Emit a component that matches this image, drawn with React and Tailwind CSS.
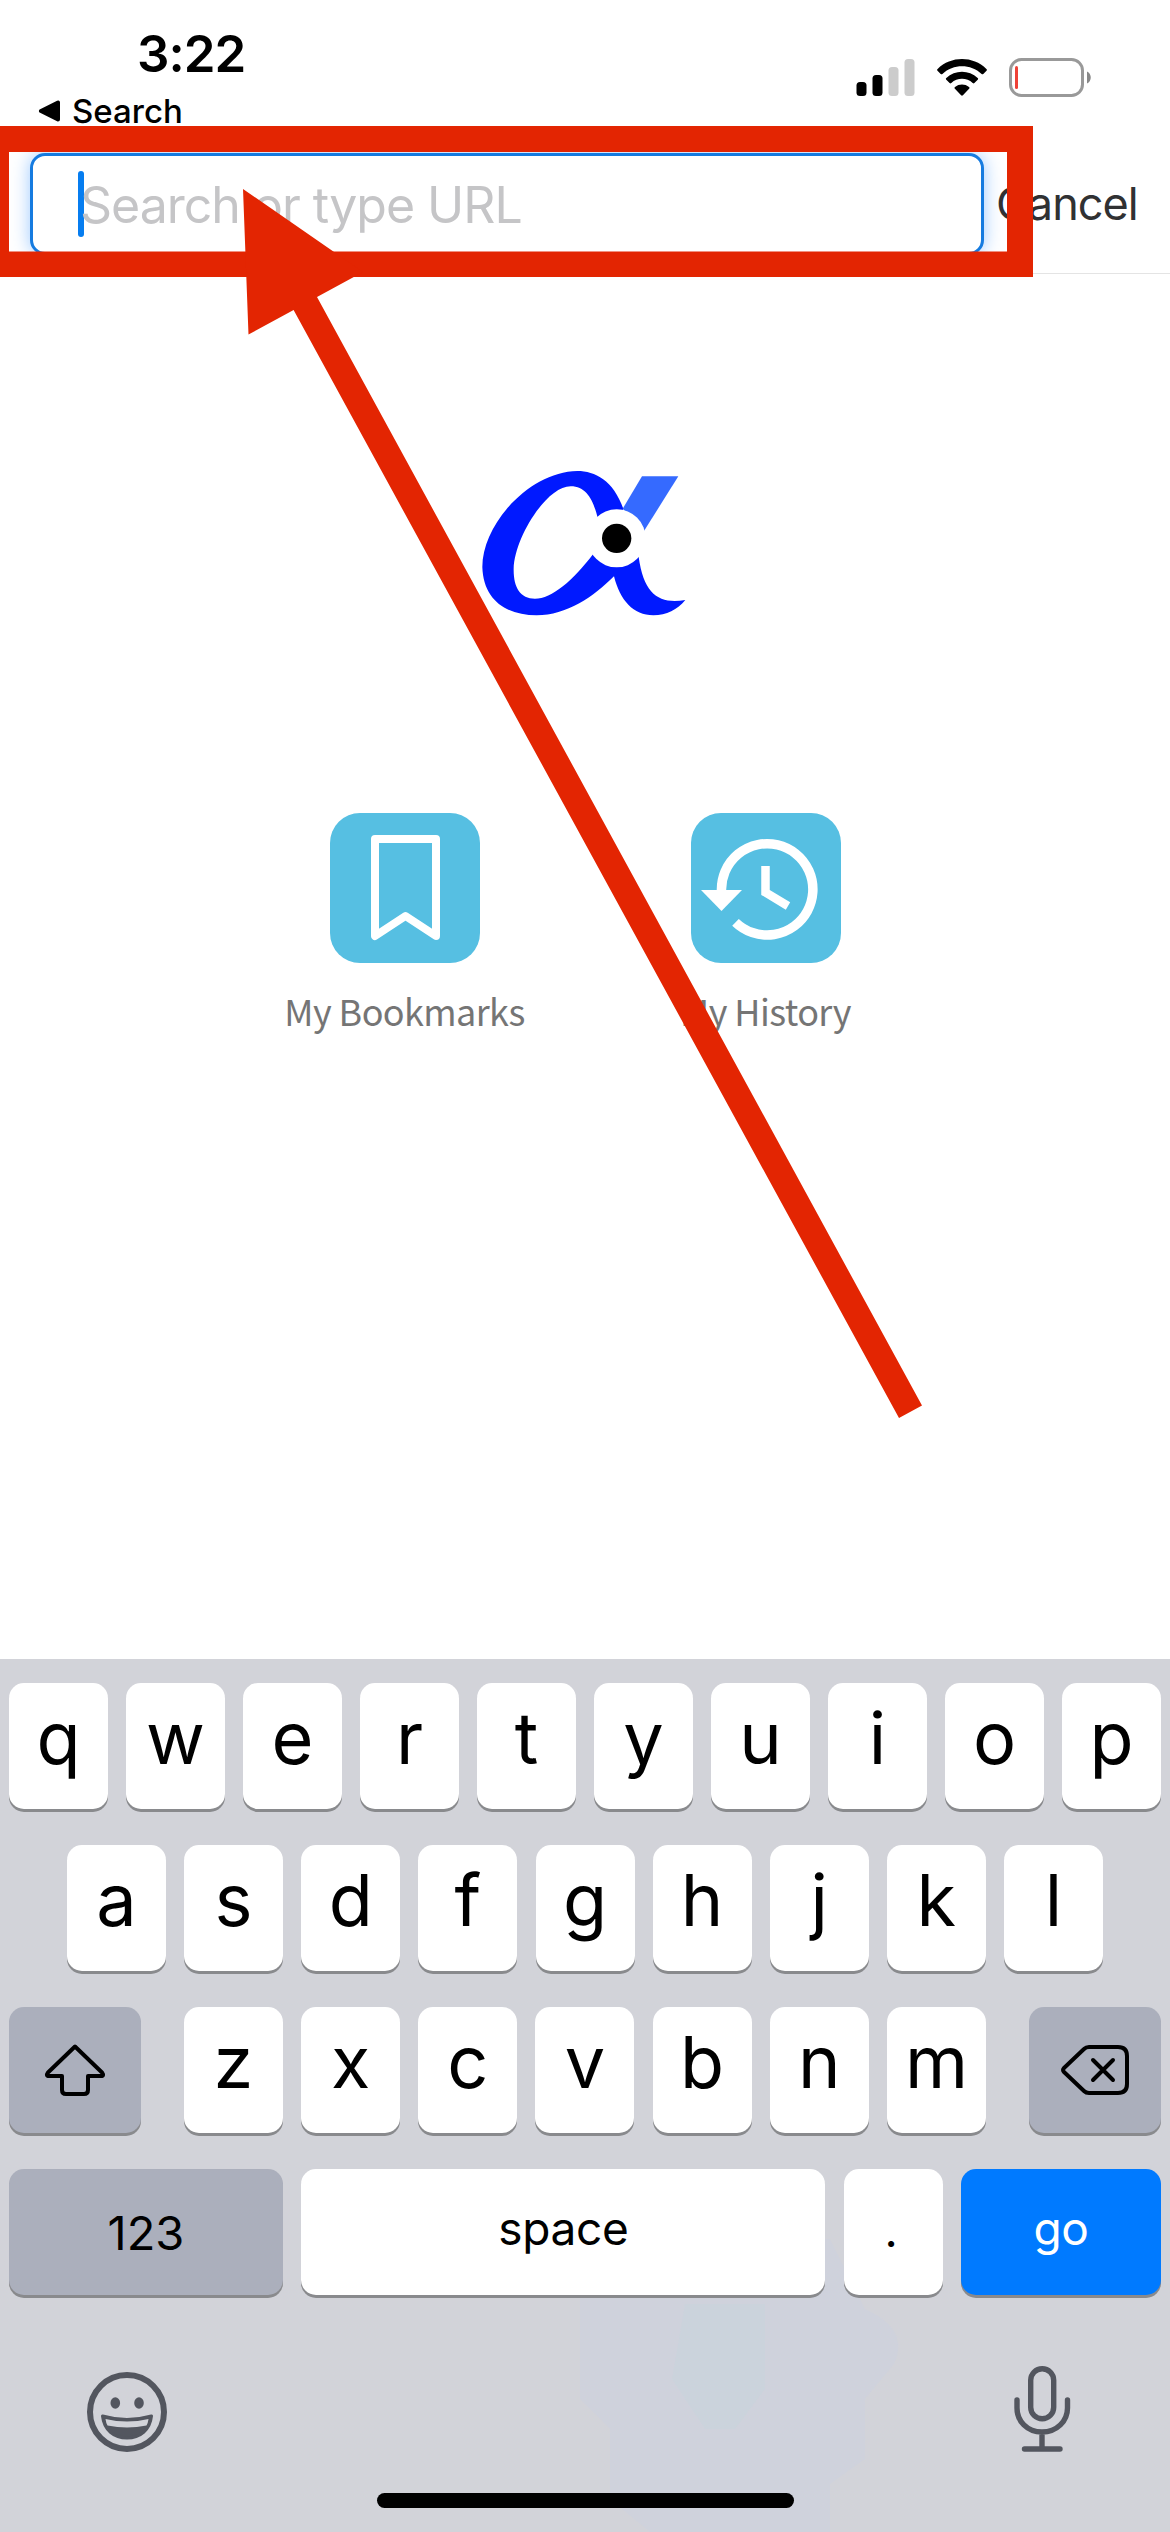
import React from "react";

function Key({ children, className = "" }) {
  return (
    <div
      className={
        "flex h-[126px] items-center justify-center rounded-[15px] shadow-[0_3px_0_#898a8d] " +
        className
      }
    >
      {children}
    </div>
  );
}

function Letter({ char }) {
  return (
    <Key className="w-[99px] bg-white pb-4 text-[72px] leading-none font-normal">{char}</Key>
  );
}

function StatusBar() {
  return (
    <header className="flex h-[126px] justify-between">
      <div className="flex flex-col pt-[24px] pl-[38px]">
        <div className="pl-[99px] text-[51px] leading-[60px] font-semibold tracking-[-1px]">3:22</div>
        <div className="mt-[7px] flex items-center text-[33px] leading-[40px] font-medium">
          <svg className="mr-[11px] h-[22px] w-[23px]" viewBox="0 0 23 22">
            <path d="M3 11L20 2.5v17z" fill="#000" stroke="#000" strokeWidth="4" strokeLinejoin="round" />
          </svg>
          <span>Search</span>
        </div>
      </div>
      <div className="flex items-start pt-[58px] pr-[77px]">
        <svg className="mt-px mr-[22px] h-[37px] w-[59px]" viewBox="0 0 59 37">
          <rect x="0.5" y="23" width="10" height="14" rx="3.5" />
          <rect x="16.5" y="16" width="10" height="21" rx="3.5" />
          <rect x="32.5" y="8" width="10" height="29" rx="3.5" fill="#ccc" />
          <rect x="48.5" y="0" width="10" height="37" rx="3.5" fill="#ccc" />
        </svg>
        <svg className="mt-px mr-[22px] h-[37px] w-[50px]" viewBox="0 0 50 37">
          <path d="M0.6 9.9C14-3.2 36-3.2 49.4 9.9c.7.7.7 1.2.1 1.8l-3.2 3.2c-.6.6-1.1.6-1.7 0-10.8-10.3-28.400-10.300-39.200 0-.6.6-1.100.6-1.700 0L.5 11.700c-.6-.6-.6-1.100.1-1.800z" />
          <path d="M9.300 19c8.800-8.400 22.600-8.400 31.400 0 .6.6.6 1.100 0 1.700l-3.300 3.300c-.6.6-1 .6-1.700 0-6-5.600-15.400-5.600-21.400 0-.7.6-1.100.6-1.700 0l-3.300-3.300c-.6-.6-.6-1.100 0-1.700z" />
          <path d="M18 28c4-3.300 10-3.300 14 0 .7.6.7 1.200.1 1.800l-6.200 6.500c-.6.6-1.200.6-1.800 0l-6.200-6.500c-.6-.6-.6-1.200.1-1.800z" />
        </svg>
        <svg className="h-[39px] w-[84px]" viewBox="0 0 84 39">
          <rect x="1.500" y="1.500" width="72" height="36" rx="11" fill="none" stroke="#999" strokeWidth="3" />
          <rect x="6" y="8" width="3" height="23" rx="1.500" fill="#ee4238" />
          <path d="M78 13.500c5 2 5 10 0 12z" fill="#888" />
        </svg>
      </div>
    </header>
  );
}

function SearchBar() {
  return (
    <div className="flex h-[148px] items-start border-b border-[#e4e4e4] pt-[27px] pl-[30px]">
      <div className="flex h-[102px] w-[954px] items-center rounded-[15px] border-[3px] border-[#157be0] bg-white pb-[1px] pl-[45px] shadow-[0_0_18px_rgba(60,150,255,0.5)]">
        <span className="h-[66px] w-[6px] shrink-0 rounded-full bg-[#067df0]" />
        <span className="-ml-[4px] pt-[2px] text-[50px] leading-[60px] tracking-[-1px] text-[#c5c5c7]">Search or type URL</span>
      </div>
      <div className="ml-[12px] pt-[23px] text-[45px] leading-[56px] tracking-[-1px] text-[#303133]">Cancel</div>
    </div>
  );
}

function Logo() {
  return (
    <svg className="h-[150px] w-[210px]" viewBox="120 80 630 450">
      <path
        d="M550 205C520 120 465 92 412 92C270 94 127 250 127 380C130 480 200 525 290 525C380 525 460 470 522 408C540 480 580 525 640 525C680 525 712 508 736 479C660 492 612 465 596 350L550 290L460 340C400 420 335 475 285 475C240 475 220 440 221 385C224 290 320 138 392 138C440 138 460 180 473 232L530 250z"
        fill="#0019ff"
      />
      <path d="M548 205L606 108H715L612 272z" fill="#356aff" />
      <circle cx="530" cy="294" r="87" fill="#fff" />
      <circle cx="530" cy="294" r="44" />
    </svg>
  );
}

function Shortcut({ label, children }) {
  return (
    <div className="flex w-[361px] flex-col items-center">
      <div className="h-[150px] w-[150px] rounded-[30px] bg-[#56bfe2]">{children}</div>
      <div className="mt-[20px] text-[36px] leading-[54px] tracking-[-0.6px] text-[#757575] [font-family:'Noto_Sans_CJK_SC',sans-serif]">
        {label}
      </div>
    </div>
  );
}

function Keyboard() {
  return (
    <section className="relative h-[873px] overflow-hidden bg-[#d2d3d9] pt-[24px]">
      <svg className="absolute top-[580px] left-[560px] h-[293px] w-[350px]" viewBox="0 0 350 293">
        <path d="M90 0H270L305 70Q350 90 334 125L305 160V220L270 245V293H90L50 260V190L20 160V20z" fill="#cfd2dc" />
        <path d="M125 65H205V150L175 190H145L112 140z" fill="#cbd3dc" />
      </svg>
      <div className="relative">
        <div className="flex justify-between px-[9px]">
          {[..."qwertyuiop"].map((c) => <Letter key={c} char={c} />)}
        </div>
        <div className="mt-[36px] flex justify-between px-[67px]">
          {[..."asdfghjkl"].map((c) => <Letter key={c} char={c} />)}
        </div>
        <div className="mt-[36px] flex justify-between px-[9px]">
          <Key className="w-[132px] bg-[#abafbc]">
            <svg className="h-[54px] w-[62px]" viewBox="0 0 62 54" fill="none" stroke="#000" strokeWidth="4" strokeLinejoin="round">
              <path d="M31 3.500L58 29.500Q60.500 33 57 33H44V47Q44 51 40 51H22Q18 51 18 47V33H5Q1.500 33 4 29.500z" />
            </svg>
          </Key>
          <div className="flex w-[802px] justify-between">
            {[..."zxcvbnm"].map((c) => <Letter key={c} char={c} />)}
          </div>
          <Key className="w-[132px] bg-[#abafbc]">
            <svg className="h-[52px] w-[70px]" viewBox="0 0 70 52" fill="none" stroke="#000" strokeWidth="4" strokeLinecap="round" strokeLinejoin="round">
              <path d="M29 3H58Q67 3 67 12V40Q67 49 58 49H29Q26 49 24 47L4 28Q2 26 4 24L24 5Q26 3 29 3z" />
              <path d="M33 16L53 36M53 16L33 36" />
            </svg>
          </Key>
        </div>
        <div className="mt-[36px] flex justify-between px-[9px] text-[46px] leading-none">
          <Key className="w-[274px] bg-[#abafbc] text-[47px]">123</Key>
          <Key className="w-[524px] bg-white pb-[8px] tracking-[-0.3px]">space</Key>
          <Key className="w-[99px] bg-white pr-[4px] pb-[4px]">.</Key>
          <Key className="w-[200px] bg-[#007aff] pb-[8px] tracking-[-0.5px] text-white">go</Key>
        </div>
        <div className="mt-[68px] flex items-start justify-between pr-[98px] pl-[85px]">
          <svg className="mt-[7px] h-[84px] w-[84px]" viewBox="0 0 84 84">
            <circle cx="42" cy="42" r="37" fill="none" stroke="#53565f" strokeWidth="6" />
            <ellipse cx="30.300" cy="33" rx="4.800" ry="5.800" fill="#53565f" />
            <ellipse cx="54" cy="33" rx="4.800" ry="5.800" fill="#53565f" />
            <path d="M17.500 46Q42 53 66.500 46C65 60 55 68 42 68S19 60 17.500 46z" fill="#53565f" stroke="#53565f" strokeWidth="3" strokeLinejoin="round" />
            <path d="M20.500 49Q42 54 63.500 49Q63 53 61.500 55.500Q42 59.500 22.500 55.500Q21 53 20.500 49z" fill="#d2d3d9" />
          </svg>
          <svg className="h-[90px] w-[60px]" viewBox="0 0 60 90" fill="none" stroke="#53565f" strokeWidth="5.400" strokeLinecap="round">
            <rect x="18.700" y="5.700" width="23" height="50" rx="11.500" />
            <path d="M5 37V45C5 58 15 69 30 69S55.500 58 55.500 45V37M30 70V86M12.500 86H48" />
          </svg>
        </div>
      </div>
      <div className="absolute bottom-[24px] left-[377px] h-[15px] w-[417px] rounded-full bg-black" />
    </section>
  );
}

export default function App() {
  return (
    <div className="relative h-[2532px] w-[1170px] overflow-hidden bg-white text-black [font-family:Inter,sans-serif]">
      <StatusBar />
      <SearchBar />
      <main className="flex h-[1385px] flex-col items-center pt-[193px]">
        <Logo />
        <div className="mt-[196px] flex">
          <Shortcut label="My Bookmarks">
            <svg className="h-full w-full" viewBox="0 0 150 150" fill="none" stroke="#fff" strokeWidth="8" strokeLinejoin="round">
              <path d="M45 26H106V123L75.500 103L45 123z" />
            </svg>
          </Shortcut>
          <Shortcut label="My History">
            <svg className="h-full w-full" viewBox="0 0 150 150" fill="none" stroke="#fff" strokeWidth="9.500">
              <path d="M30.500 78A45.700 45.700 0 1 1 44.500 109.300" />
              <path d="M10 77H51L30.500 98z" fill="#fff" stroke="none" />
              <path d="M74.500 53V79.500L97 93" strokeWidth="8.500" />
            </svg>
          </Shortcut>
        </div>
      </main>
      <Keyboard />
      <svg className="pointer-events-none absolute top-0 left-0 h-[1440px] w-[1170px]" viewBox="0 0 1170 1440" fill="#e32502">
        <path d="M0 126H1033V277H0zM9 152V251.500H1007V152z" fillRule="evenodd" />
        <path d="M243 189L363 272L317 297L922 1405.500L899 1418L293.600 310L248.500 334.500z" />
      </svg>
    </div>
  );
}
